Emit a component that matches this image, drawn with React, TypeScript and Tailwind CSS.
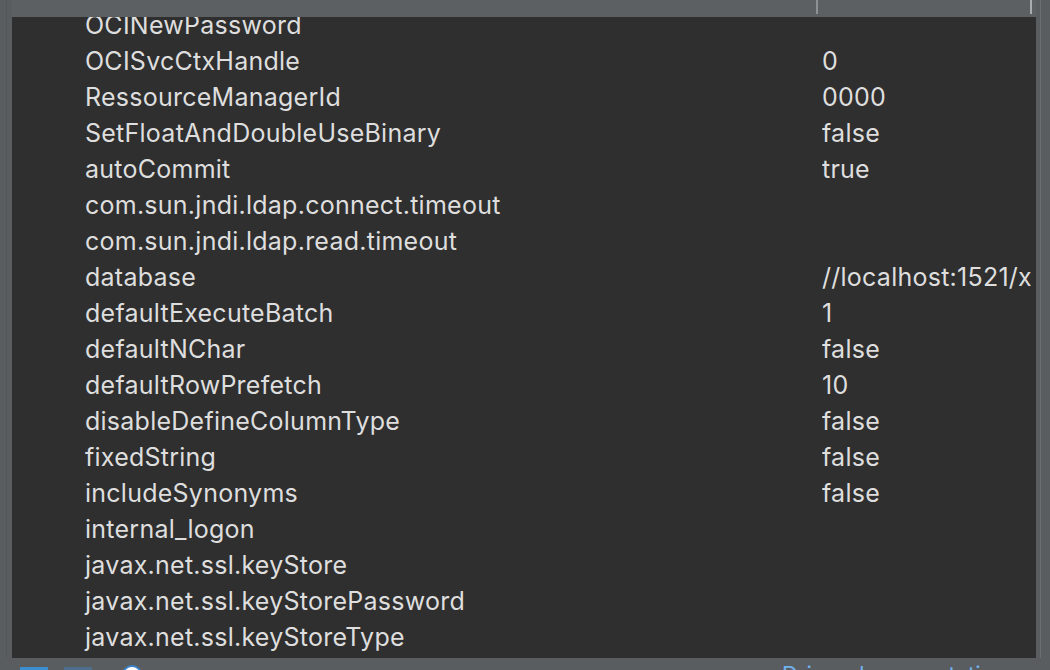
const rows: [string, string][] = [
  ['OCINewPassword', ''],
  ['OCISvcCtxHandle', '0'],
  ['RessourceManagerId', '0000'],
  ['SetFloatAndDoubleUseBinary', 'false'],
  ['autoCommit', 'true'],
  ['com.sun.jndi.ldap.connect.timeout', ''],
  ['com.sun.jndi.ldap.read.timeout', ''],
  ['database', '//localhost:1521/xe'],
  ['defaultExecuteBatch', '1'],
  ['defaultNChar', 'false'],
  ['defaultRowPrefetch', '10'],
  ['disableDefineColumnType', 'false'],
  ['fixedString', 'false'],
  ['includeSynonyms', 'false'],
  ['internal_logon', ''],
  ['javax.net.ssl.keyStore', ''],
  ['javax.net.ssl.keyStorePassword', ''],
  ['javax.net.ssl.keyStoreType', ''],
];

export default function App() {
  return (
    <div
      className="w-[1050px] h-[670px] bg-[#595d60] flex flex-col overflow-hidden"
      style={{ fontFamily: 'Inter, "Open Sans", sans-serif' }}
    >
      <div className="flex flex-1 min-h-0">
        {/* left gutter */}
        <div className="w-[12px] flex">
          <div className="w-[6px]" />
          <div className="w-px bg-[#53575a]" />
        </div>

        {/* properties table */}
        <div className="w-[1024px] flex flex-col">
          <div className="h-[17px] bg-[#5c6063] flex">
            <div className="w-[806px] border-r-2 border-[#8d9194] h-[14px]" />
            <div className="w-[214px] border-r-2 border-[#a9adb0] h-[14px]" />
          </div>
          <div className="flex-1 bg-[#2f2f2f] overflow-hidden">
            <div className="-mt-[9px]">
              {rows.map(([k, v]) => (
                <div key={k} className="h-[36px] flex items-center text-[25px] tracking-[0.25px] text-[#dedede]">
                  <div className="w-[810px] pl-[73px] whitespace-nowrap">{k}</div>
                  <div className="w-[209px] whitespace-nowrap overflow-hidden">{v}</div>
                </div>
              ))}
            </div>
          </div>
        </div>

        {/* scrollbar track */}
        <div className="flex-1 flex">
          <div className="w-[4px]" />
          <div className="w-px bg-[#6a6e71]" />
        </div>
      </div>

      {/* bottom toolbar, mostly out of view */}
      <div className="h-[12px] flex items-start relative">
        <div className="absolute left-[20px] top-[9px] w-[28px] h-[6px] bg-[#3b8ed0]" />
        <div className="absolute left-[64px] top-[9px] w-[28px] h-[6px] bg-[#4d6f8c]" />
        <div className="absolute left-[122px] top-[7px] w-[20px] h-[20px] rounded-full border-2 border-[#3b82c8] bg-white" />
        <div className="absolute left-[782px] top-[5px] text-[22px] leading-none text-[#6fb4ef]">
          Driver documentation
        </div>
      </div>
    </div>
  );
}
